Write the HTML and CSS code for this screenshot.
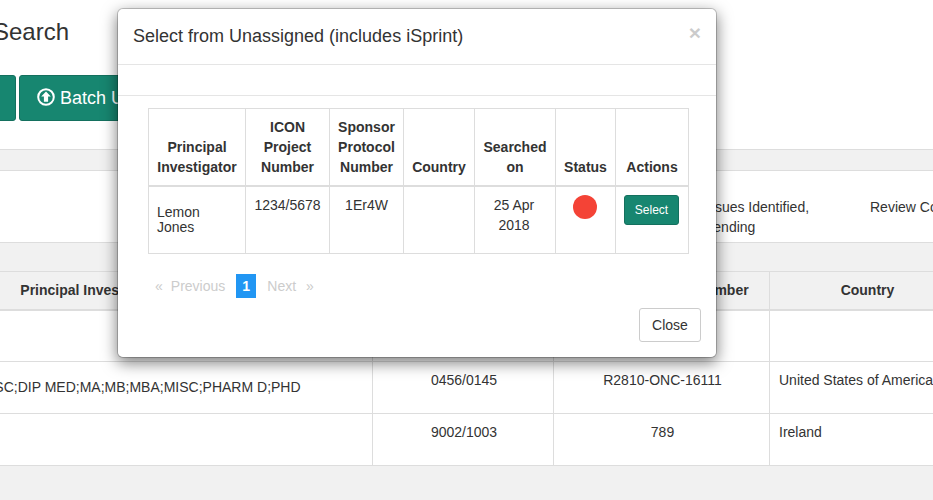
FILE: index.html
```html
<!DOCTYPE html>
<html lang="en">
<head>
<meta charset="utf-8">
<title>Select from Unassigned</title>
<link rel="stylesheet" href="styles.css">
</head>
<body>
<div class="page">
  <h2 class="page-title">Search</h2>
  <div class="toolbar">
    <button class="btn-main btn-first">Export</button>
    <button class="btn-main">
      <svg class="up-icon" viewBox="0 0 18 18" aria-hidden="true"><circle cx="9" cy="9" r="7.8" fill="none" stroke="#fff" stroke-width="2"/><path d="M9 3.4 13.8 8.4H11.1V13.8H6.9V8.4H4.2Z" fill="#fff"/></svg>
      Batch Upload
    </button>
  </div>
  <div class="strip"></div>
  <div class="summary">
    <div class="summary-issues">Issues Identified,<br>Pending</div>
    <div class="summary-review">Review Complete</div>
  </div>
  <div class="spacer"></div>
  <table class="results">
    <colgroup><col class="c1"><col class="c2"><col class="c3"><col class="c4"><col class="c5"></colgroup>
    <thead>
      <tr><th class="th-name">Principal Investigator</th><th>ICON Project Number</th><th>Sponsor Protocol Number</th><th>Country</th><th></th></tr>
    </thead>
    <tbody>
      <tr><td></td><td class="mid"></td><td class="mid"></td><td></td><td></td></tr>
      <tr><td class="quals">BAO;BCH;BS;MBBS;MD;MSC;DIP MED;MA;MB;MBA;MISC;PHARM D;PHD</td><td class="mid">0456/0145</td><td class="mid">R2810-ONC-16111</td><td>United States of America</td><td></td></tr>
      <tr><td></td><td class="mid">9002/1003</td><td class="mid">789</td><td>Ireland</td><td></td></tr>
    </tbody>
  </table>
</div>

<div class="modal">
  <div class="modal-header">
    <h4 class="modal-title">Select from Unassigned (includes iSprint)</h4>
    <span class="close">×</span>
  </div>
  <div class="modal-strip"></div>
  <div class="modal-body">
    <table class="picker">
      <colgroup><col class="p1"><col class="p2"><col class="p3"><col class="p4"><col class="p5"><col class="p6"><col class="p7"></colgroup>
      <thead>
        <tr><th>Principal Investigator</th><th>ICON Project Number</th><th>Sponsor Protocol Number</th><th>Country</th><th>Searched on</th><th>Status</th><th>Actions</th></tr>
      </thead>
      <tbody>
        <tr>
          <td class="left"><p class="name">Lemon<br>Jones</p></td>
          <td>1234/5678</td>
          <td>1Er4W</td>
          <td></td>
          <td class="date">25 Apr 2018</td>
          <td><span class="dot"></span></td>
          <td class="left"><button class="btn-select">Select</button></td>
        </tr>
      </tbody>
    </table>
    <div class="pager">
      <span class="pg arrow">«</span>
      <span class="pg prev">Previous</span>
      <span class="pg current">1</span>
      <span class="pg next">Next</span>
      <span class="pg arrow">»</span>
    </div>
  </div>
  <div class="modal-footer"><button class="btn-close">Close</button></div>
</div>
</body>
</html>
```

FILE: styles.css
```css
* { box-sizing: border-box; }
html, body { margin: 0; height: 500px; overflow: hidden; background: #f1f1f1; }
body { font-family: "Liberation Sans", Arial, sans-serif; font-size: 14px; line-height: 20px; color: #333; position: relative; }

.page { width: 1700px; margin-left: -192px; height: 500px; }
.page-title { margin: 0; height: 75px; padding: 18px 0 0 185px; font-size: 24px; line-height: 28px; font-weight: 400; background: #fff; }
.toolbar { height: 74px; display: flex; gap: 3px; align-items: flex-start; background: #fff; padding-left: 40px; }
.btn-main { height: 46px; border: 1px solid #14705e; border-radius: 3px; background: #178670; color: #fff; font: 18px/24px "Liberation Sans", Arial, sans-serif; padding: 0 17px; display: flex; align-items: center; gap: 5px; }
.btn-first { width: 168px; }
.up-icon { width: 18px; height: 18px; margin-top: -3px; }
.strip { height: 22px; background: #f1f1f1; border-top: 1px solid #ddd; border-bottom: 1px solid #ddd; }
.summary { height: 72px; background: #fff; border-bottom: 1px solid #ddd; padding: 26px 0 0 896px; display: flex; }
.summary-issues { width: 166px; }
.spacer { height: 28px; }

.results { width: 1400px; table-layout: fixed; border-collapse: collapse; background: #fff; }
.c1 { width: 564px; } .c2 { width: 181px; } .c3 { width: 216px; } .c4 { width: 196px; }
.results th { height: 38px; background: #f1f1f1; border: 1px solid #ddd; border-bottom-width: 2px; text-align: center; padding: 8px; font-weight: 700; }
.results th.th-name { padding-left: 10px; }
.results td { height: 52px; border: 1px solid #ddd; padding: 8px 9px; vertical-align: top; }
.results td.mid { text-align: center; padding: 8px 8px 8px 10px; }
.results td.quals { padding: 15px 8px 0 15px; text-align: left; }

.modal { position: absolute; left: 117px; top: 8px; width: 600px; height: 350px; background: #fff; border: 1px solid rgba(0,0,0,.2); border-radius: 6px; box-shadow: 0 5px 15px rgba(0,0,0,.5); background-clip: padding-box; }
.modal-header { height: 56px; padding: 15px; border-bottom: 1px solid #e5e5e5; display: flex; justify-content: space-between; }
.modal-title { margin: 0; font-size: 18px; line-height: 25px; font-weight: 400; }
.close { font-size: 21px; font-weight: 700; line-height: 18px; color: #000; opacity: .2; }
.modal-strip { height: 31px; border-bottom: 1px solid #e5e5e5; }
.modal-body { padding: 12px 0 0 30px; }
.picker { width: 540px; table-layout: fixed; border-collapse: collapse; }
.p1 { width: 97px; } .p2 { width: 84px; } .p3 { width: 74px; } .p4 { width: 71px; } .p5 { width: 81px; } .p6 { width: 60px; } .p7 { width: 73px; }
.picker th { border: 1px solid #ddd; border-bottom-width: 2px; padding: 8px; vertical-align: bottom; text-align: center; font-weight: 700; }
.picker td { border: 1px solid #ddd; padding: 8px; vertical-align: top; text-align: center; }
.picker td.left { text-align: left; }
.picker td.date { padding-right: 10px; }
.name { margin: 10px 0; line-height: 15px; }
.dot { display: block; width: 24px; height: 24px; margin: 0 0 0 9px; border-radius: 50%; background: #f44336; }
.btn-select { width: 55px; height: 30px; padding: 0; border: 1px solid #14705e; border-radius: 3px; background: #178670; color: #fff; font: 12px/18px "Liberation Sans", Arial, sans-serif; }

.pager { display: flex; align-items: center; margin-top: 20px; height: 24px; color: #ccc; padding-left: 7px; }
.pg { line-height: 24px; }
.prev { margin-left: 8px; }
.current { width: 20px; margin-left: 11px; text-align: center; background: #2196f3; color: #fff; font-weight: 700; }
.next { margin-left: 11px; }
.pager .arrow:last-child { margin-left: 10px; }

.modal-footer { position: absolute; right: 15px; bottom: 15px; }
.btn-close { width: 62px; height: 34px; padding: 0; background: #fff; border: 1px solid #ccc; border-radius: 3px; color: #333; font: 14px/20px "Liberation Sans", Arial, sans-serif; }
```
